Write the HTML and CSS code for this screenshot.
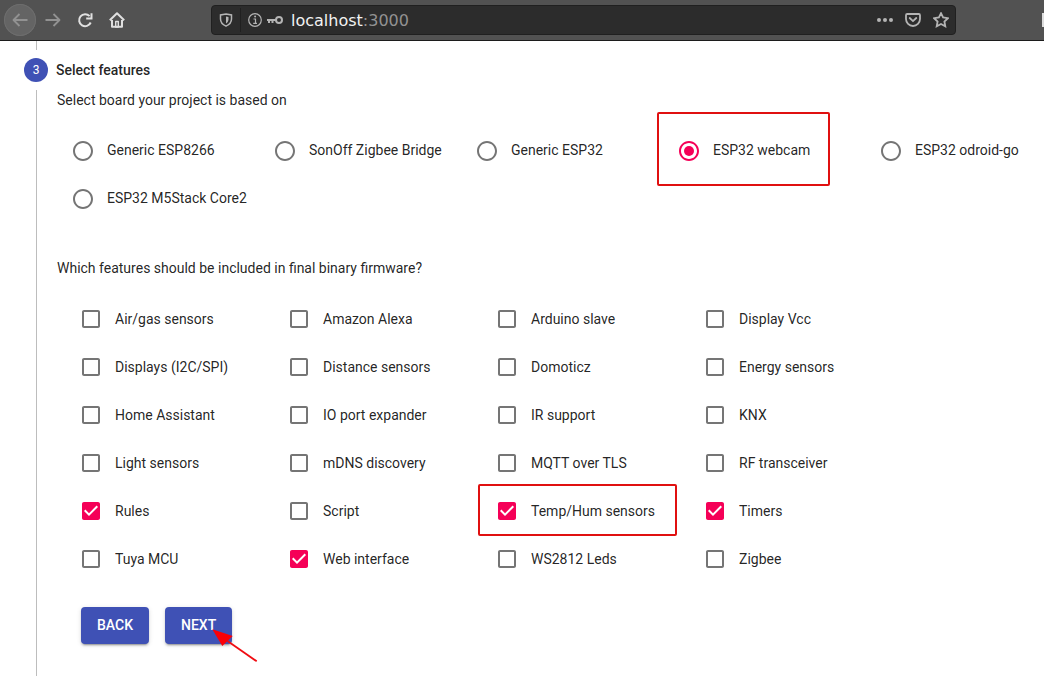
FILE: index.html
```html
<!DOCTYPE html>
<html lang="en">
<head>
<meta charset="utf-8">
<title>Select features</title>
<link rel="stylesheet" href="styles.css">
<script src="app.js" defer></script>
</head>
<body>
<svg class="sprites" width="0" height="0">
  <symbol id="radio-off" viewBox="0 0 24 24"><path d="M12 2C6.480 2 2 6.480 2 12s4.480 10 10 10 10-4.480 10-10S17.520 2 12 2zm0 18c-4.420 0-8-3.580-8-8s3.580-8 8-8 8 3.580 8 8-3.580 8-8 8z"/></symbol>
  <symbol id="radio-on" viewBox="0 0 24 24"><path d="M12 2C6.480 2 2 6.480 2 12s4.480 10 10 10 10-4.480 10-10S17.520 2 12 2zm0 18c-4.420 0-8-3.580-8-8s3.580-8 8-8 8 3.580 8 8-3.580 8-8 8z"/><circle cx="12" cy="12" r="5"/></symbol>
  <symbol id="check-off" viewBox="0 0 24 24"><path d="M19 5v14H5V5h14m0-2H5c-1.100 0-2 .9-2 2v14c0 1.100.9 2 2 2h14c1.100 0 2-.9 2-2V5c0-1.100-.9-2-2-2z"/></symbol>
  <symbol id="check-on" viewBox="0 0 24 24"><path d="M19 3H5c-1.110 0-2 .9-2 2v14c0 1.100.890 2 2 2h14c1.110 0 2-.9 2-2V5c0-1.100-.890-2-2-2zm-9 14l-5-5 1.410-1.410L10 14.170l7.590-7.590L19 8l-9 9z"/></symbol>
</svg>
<header class="toolbar">
  <nav class="nav">
    <span class="nav-button back"><svg width="16" height="16" viewBox="0 0 16 16"><path d="M15.500 8H1.500M7.500 2L1.500 8l6 6"/></svg></span>
    <span class="nav-button forward"><svg width="16" height="16" viewBox="0 0 16 16"><path d="M.5 8h14M8.500 2l6 6-6 6"/></svg></span>
    <span class="nav-button"><svg width="16" height="16" viewBox="0 0 16 16"><path d="M13.700 10.500A6 6 0 1 1 12.600 4.200"/><path d="M14.500 1.200v5.300H9.200" stroke-linejoin="miter"/></svg></span>
    <span class="nav-button"><svg width="16" height="16" viewBox="0 0 16 16"><path d="M.8 8.200L8 1.300l7.200 6.900M3 8v6.800h10V8"/><path d="M6.700 15V9.500h2.600V15z" stroke-width="1.400"/></svg></span>
  </nav>
  <div class="urlbar">
    <svg class="shield" width="14" height="14" viewBox="0 0 14 14"><path d="M7 1L12.500 2v4c0 3.400-2.300 5.700-5.500 7.100C3.800 11.700 1.500 9.400 1.500 6V2z"/><path d="M7 3.500v6.900c1.600-1 2.500-2.300 2.500-4.200V4z" class="solid"/></svg>
    <span class="divider"></span>
    <svg class="info" width="14" height="14" viewBox="0 0 14 14"><circle cx="7" cy="7" r="6.300"/><path d="M5.500 6h2v4.200M5.200 10.400h3.800"/><circle class="solid" cx="7.100" cy="3.600" r="1"/></svg>
    <svg class="key" width="16" height="10" viewBox="0 0 16 10"><circle cx="12" cy="5" r="3"/><path d="M9 5H0M2 5v3M5.500 5v3"/></svg>
    <span class="address">localhost<span class="port">:3000</span></span>
    <svg class="dots" width="16" height="4" viewBox="0 0 16 4"><circle cx="2" cy="2" r="2"/><circle cx="8" cy="2" r="2"/><circle cx="14" cy="2" r="2"/></svg>
    <svg class="pocket" width="16" height="16" viewBox="0 0 16 16"><path d="M2.200 2h11.600q1.200 0 1.200 1.200V7A7 7 0 0 1 1 7V3.200Q1 2 2.200 2z"/><path d="M4.700 6L8 9.100 11.300 6" stroke-linecap="round"/></svg>
    <svg class="star" width="16" height="16" viewBox="0 0 16 16"><path d="M8 1.200l2.100 4.300 4.800.7-3.500 3.300.9 4.800L8 12l-4.300 2.300.9-4.800L1.100 6.200l4.800-.7z"/></svg>
  </div>
  <span class="edge-icon"></span>
</header>
<main class="stepper">
  <div class="connector"></div>
  <div class="step-label"><span class="step-number">3</span><span>Select features</span></div>
  <section class="step-content">
    <p class="prompt">Select board your project is based on</p>
    <div class="boards"></div>
    <p class="prompt">Which features should be included in final binary firmware?</p>
    <div class="features"></div>
    <div class="actions">
      <button class="button">BACK</button>
      <button class="button">NEXT<svg class="arrow" width="50" height="36" viewBox="0 0 50 36"><path d="M15.500 13L44.700 33.300" fill="none" stroke="#f00c12" stroke-width="1.800"/><path d="M.3 1.300L20.700 8 10.300 18z" fill="#fb0007"/></svg></button>
    </div>
  </section>
</main>
</body>
</html>
```

FILE: styles.css
```css
*, *::after { box-sizing: border-box; }
body {
  margin: 0;
  height: 676px;
  overflow: hidden;
  display: flex;
  flex-direction: column;
  background: #fff;
  color: rgba(0, 0, 0, 0.87);
  font: 14px/20px Roboto, sans-serif;
}
.sprites { position: absolute; }
.toolbar {
  flex: none;
  height: 41px;
  display: flex;
  align-items: center;
  background: #525252;
  border-bottom: 1px solid #1c1c1c;
}
.toolbar svg { flex: none; fill: none; stroke: #b4b4b4; stroke-width: 1.500; }
.toolbar .solid { fill: #b4b4b4; stroke: none; }
.nav { width: 211px; display: flex; align-items: center; padding-left: 4px; }
.nav-button { width: 32px; height: 32px; display: flex; align-items: center; justify-content: center; }
.toolbar .nav-button svg { stroke: #e0e0e0; stroke-width: 2; stroke-linejoin: round; }
.back { border-radius: 50%; background: #646464; box-shadow: inset 0 0 0 1px #6d6d6d; }
.toolbar .back svg, .toolbar .forward svg { stroke: #929292; stroke-width: 1.800; }
.forward { margin-left: 1px; }
.urlbar {
  width: 745px;
  height: 30px;
  display: flex;
  align-items: center;
  padding: 0 6px 0 7px;
  background: #2c2c2c;
  border: 1px solid #202020;
  border-radius: 4px;
}
.divider { width: 1px; height: 24px; margin: 0 7px; background: #202020; }
.toolbar .info { stroke-width: 1.200; }
.toolbar .key { margin: 0 8px 0 5px; stroke-width: 2; }
.address { flex: 1; padding-top: 2px; color: #f2f2f2; font: 16px/22px "DejaVu Sans", sans-serif; }
.port { color: #929292; }
.toolbar .dots { fill: #b4b4b4; stroke: none; }
.pocket, .star { margin-left: 12px; }
.toolbar .pocket, .toolbar .star { stroke-width: 1.800; }
.edge-icon { width: 2px; height: 14px; margin-left: auto; background: #ddd; }
.stepper { flex: 1; display: flex; flex-direction: column; padding-left: 24px; }
.connector { height: 9px; margin-left: 12px; border-left: 1px solid #bdbdbd; }
.step-label { display: flex; align-items: center; height: 24px; margin: 8px 0; gap: 8px; font-weight: 500; }
.step-number {
  width: 24px;
  height: 24px;
  border-radius: 50%;
  background: #3f51b5;
  color: #fff;
  font-size: 12px;
  font-weight: 400;
  line-height: 24px;
  text-align: center;
}
.step-content { flex: 1; margin-left: 12px; border-left: 1px solid #bdbdbd; padding-left: 20px; }
.prompt { margin: 0; }
.boards { display: grid; grid-template-columns: repeat(5, 202px); grid-auto-rows: 48px; padding: 16px 0 36px 5px; }
.features { display: grid; grid-template-columns: repeat(4, 208px); grid-auto-rows: 48px; padding: 17px 0 24px 13px; }
.option { display: flex; align-items: center; position: relative; }
.icon { width: 24px; height: 24px; margin: 0 12px 0 9px; fill: #757575; }
.boards .icon { position: relative; top: 1px; }
.checked .icon { fill: #f50057; }
.highlight::after {
  content: "";
  position: absolute;
  border: 2px solid #e01010;
  border-radius: 2px;
}
.boards .highlight::after { left: -11px; top: -14px; width: 173px; height: 74px; }
.features .highlight::after { left: -8px; top: -3px; width: 199px; height: 52px; }
.actions { display: flex; gap: 16px; margin-left: 24px; }
.button {
  position: relative;
  height: 37px;
  padding: 0 16px 2px;
  border: 0;
  border-radius: 4px;
  background: #3f51b5;
  color: #fff;
  font: 500 14px/24px Roboto, sans-serif;
  box-shadow: 0 3px 1px -2px rgba(0,0,0,.2), 0 2px 2px rgba(0,0,0,.14), 0 1px 5px rgba(0,0,0,.12);
}
.arrow { position: absolute; left: 47px; top: 21px; }
```

FILE: app.js
```js
const boards = ["Generic ESP8266", "SonOff Zigbee Bridge", "Generic ESP32", "ESP32 webcam", "ESP32 odroid-go", "ESP32 M5Stack Core2"];
const features = ["Air/gas sensors", "Amazon Alexa", "Arduino slave", "Display Vcc",
  "Displays (I2C/SPI)", "Distance sensors", "Domoticz", "Energy sensors",
  "Home Assistant", "IO port expander", "IR support", "KNX",
  "Light sensors", "mDNS discovery", "MQTT over TLS", "RF transceiver",
  "Rules", "Script", "Temp/Hum sensors", "Timers",
  "Tuya MCU", "Web interface", "WS2812 Leds", "Zigbee"];
const selected = ["ESP32 webcam", "Rules", "Temp/Hum sensors", "Timers", "Web interface"];
const highlighted = ["ESP32 webcam", "Temp/Hum sensors"];

function render(target, names, kind) {
  document.querySelector(target).innerHTML = names.map((name) => {
    const on = selected.includes(name);
    const classes = ["option", on && "checked", highlighted.includes(name) && "highlight"].filter(Boolean).join(" ");
    return `<label class="${classes}"><svg class="icon"><use href="#${kind}-${on ? "on" : "off"}"/></svg><span>${name}</span></label>`;
  }).join("");
}
render(".boards", boards, "radio");
render(".features", features, "check");
```
